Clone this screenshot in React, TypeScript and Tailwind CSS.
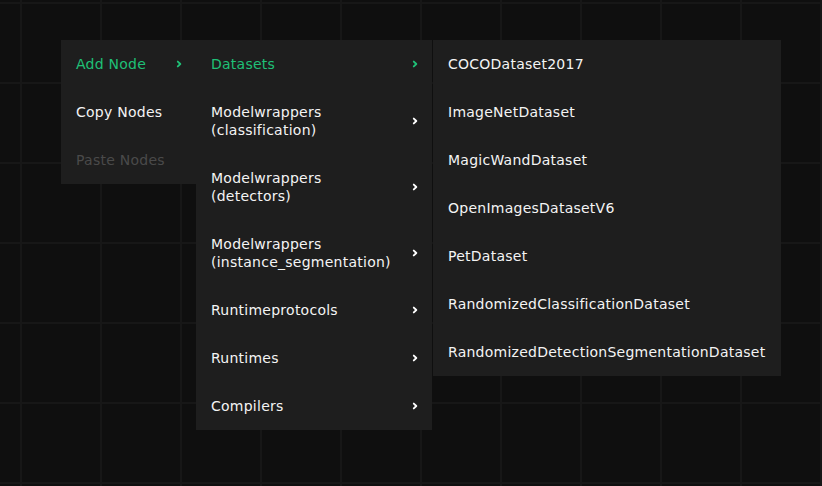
import React from 'react';

type Item = { label: string[]; sub?: boolean; active?: boolean; disabled?: boolean };

const rootItems: Item[] = [
  { label: ['Add Node'], sub: true, active: true },
  { label: ['Copy Nodes'] },
  { label: ['Paste Nodes'], disabled: true },
];

const categories: Item[] = [
  { label: ['Datasets'], sub: true, active: true },
  { label: ['Modelwrappers', '(classification)'], sub: true },
  { label: ['Modelwrappers', '(detectors)'], sub: true },
  { label: ['Modelwrappers', '(instance_segmentation)'], sub: true },
  { label: ['Runtimeprotocols'], sub: true },
  { label: ['Runtimes'], sub: true },
  { label: ['Compilers'], sub: true },
];

const datasets: Item[] = [
  'COCODataset2017',
  'ImageNetDataset',
  'MagicWandDataset',
  'OpenImagesDatasetV6',
  'PetDataset',
  'RandomizedClassificationDataset',
  'RandomizedDetectionSegmentationDataset',
].map(l => ({ label: [l] }));

function Chevron({ active }: { active?: boolean }) {
  return (
    <svg width="6" height="8" viewBox="0 0 6 8" className={active ? 'text-[#1fc077]' : 'text-white'}>
      <path d="M1.8 1.6 L4.3 4 L1.8 6.4" fill="none" stroke="currentColor" strokeWidth="1.9" strokeLinecap="round" strokeLinejoin="round" />
    </svg>
  );
}

function MenuItem({ item }: { item: Item }) {
  const color = item.disabled ? 'text-[#4a4a4a]' : item.active ? 'text-[#1fc077]' : 'text-[#f4f4f4]';
  return (
    <div className={`flex items-center justify-between py-[15px] pl-[15px] pr-[14px] ${color}`}>
      <div className="leading-[18px]">
        {item.label.map(l => (
          <div key={l}>{l}</div>
        ))}
      </div>
      {item.sub && <Chevron active={item.active} />}
    </div>
  );
}

function Menu({ items, className }: { items: Item[]; className: string }) {
  return (
    <div className={`bg-[#1e1e1e] flex flex-col ${className}`}>
      {items.map((it, i) => (
        <MenuItem key={i} item={it} />
      ))}
    </div>
  );
}

export default function App() {
  return (
    <div
      className="w-[822px] h-[486px] overflow-hidden bg-[#0f0f0f] pt-[40px] pl-[61px] text-[14px] tracking-[0.25px]"
      style={{
        fontFamily: '"DejaVu Sans", sans-serif',
        backgroundImage:
          'linear-gradient(#171717 2px, transparent 2px), linear-gradient(90deg, #171717 2px, transparent 2px)',
        backgroundSize: '80px 80px',
        backgroundPosition: '20px 2px',
      }}
    >
      <div className="flex items-start">
        <Menu items={rootItems} className="w-[135px]" />
        <Menu items={categories} className="w-[236px]" />
        <Menu items={datasets} className="w-[348px] ml-px" />
      </div>
    </div>
  );
}
